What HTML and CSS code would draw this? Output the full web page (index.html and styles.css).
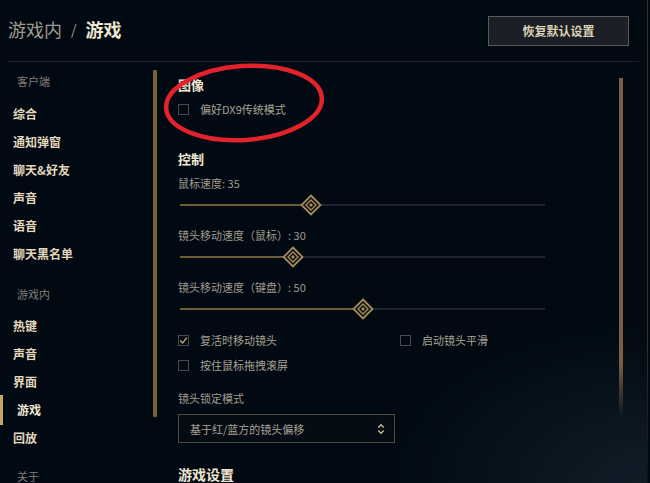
FILE: index.html
```html
<!DOCTYPE html>
<html lang="zh">
<head>
<meta charset="utf-8">
<title>游戏内 / 游戏</title>
<link rel="stylesheet" href="styles.css">
</head>
<body>
<div class="app">
  <header class="header">
    <h1 class="title"><span class="crumb">游戏内</span><span class="sep">/</span><span class="current">游戏</span></h1>
    <button class="reset-btn">恢复默认设置</button>
  </header>
  <div class="main">
    <nav class="sidebar">
      <div class="group-label">客户端</div>
      <div class="nav-item">综合</div>
      <div class="nav-item">通知弹窗</div>
      <div class="nav-item">聊天&amp;好友</div>
      <div class="nav-item">声音</div>
      <div class="nav-item">语音</div>
      <div class="nav-item">聊天黑名单</div>
      <div class="group-label group-2">游戏内</div>
      <div class="nav-item">热键</div>
      <div class="nav-item">声音</div>
      <div class="nav-item">界面</div>
      <div class="nav-item active">游戏</div>
      <div class="nav-item">回放</div>
      <div class="group-label group-3">关于</div>
    </nav>
    <div class="scroll-left"></div>
    <section class="content">
      <h2 class="section-title">图像</h2>
      <label class="check-row"><span class="box"></span><span>偏好DX9传统模式</span></label>

      <h2 class="section-title gap-lg">控制</h2>
      <div class="slider-label first">鼠标速度: 35</div>
      <div class="slider"><div class="fill" style="width:36%"></div><span class="thumb" style="left:36%"><svg width="22" height="22" viewBox="0 0 22 22"><path d="M11 1.5 L20.5 11 L11 20.5 L1.5 11 Z" fill="#0b0f14" stroke="#a88c58" stroke-width="1.8"/><path d="M11 6 L16 11 L11 16 L6 11 Z" fill="none" stroke="#a88c58" stroke-width="1.4"/><path d="M11 9 L13 11 L11 13 L9 11 Z" fill="#a88c58"/></svg></span></div>
      <div class="slider-label">镜头移动速度（鼠标）: 30</div>
      <div class="slider"><div class="fill" style="width:31%"></div><span class="thumb" style="left:31%"><svg width="22" height="22" viewBox="0 0 22 22"><path d="M11 1.5 L20.5 11 L11 20.5 L1.5 11 Z" fill="#0b0f14" stroke="#a88c58" stroke-width="1.8"/><path d="M11 6 L16 11 L11 16 L6 11 Z" fill="none" stroke="#a88c58" stroke-width="1.4"/><path d="M11 9 L13 11 L11 13 L9 11 Z" fill="#a88c58"/></svg></span></div>
      <div class="slider-label">镜头移动速度（键盘）: 50</div>
      <div class="slider"><div class="fill" style="width:50%"></div><span class="thumb" style="left:50%"><svg width="22" height="22" viewBox="0 0 22 22"><path d="M11 1.5 L20.5 11 L11 20.5 L1.5 11 Z" fill="#0b0f14" stroke="#a88c58" stroke-width="1.8"/><path d="M11 6 L16 11 L11 16 L6 11 Z" fill="none" stroke="#a88c58" stroke-width="1.4"/><path d="M11 9 L13 11 L11 13 L9 11 Z" fill="#a88c58"/></svg></span></div>

      <div class="check-grid">
        <label class="check-row"><span class="box checked"><svg width="11" height="11" viewBox="0 0 11 11"><path d="M2.2 5.6 L4.6 8 L8.8 2.6" fill="none" stroke="#c8aa6e" stroke-width="1.4"/></svg></span><span>复活时移动镜头</span></label>
        <label class="check-row"><span class="box"></span><span>启动镜头平滑</span></label>
        <label class="check-row"><span class="box"></span><span>按住鼠标拖拽滚屏</span></label>
      </div>

      <div class="field-label">镜头锁定模式</div>
      <div class="select"><span>基于红/蓝方的镜头偏移</span><svg width="8" height="12" viewBox="0 0 8 12"><path d="M1.2 4.5 L4 1.7 L6.8 4.5 M1.2 7.5 L4 10.3 L6.8 7.5" fill="none" stroke="#cdbe91" stroke-width="1.3"/></svg></div>

      <h2 class="section-title big">游戏设置</h2>

      <svg class="annotation" width="166" height="84" viewBox="0 0 166 84"><ellipse cx="82" cy="41" rx="78" ry="37" transform="rotate(-4 82 41)" fill="none" stroke="#e4222c" stroke-width="4.5"/></svg>
    </section>
    <div class="scroll-right"></div>
  </div>
</div>
</body>
</html>
```
FILE: styles.css
```css
* { box-sizing: border-box; }
html, body { margin: 0; padding: 0; }
body {
  width: 650px;
  height: 483px;
  overflow: hidden;
  background: #010a13;
  font-family: "Noto Sans CJK SC", "Noto Sans", sans-serif;
}
.app {
  width: 648px;
  height: 483px;
  background: radial-gradient(ellipse 260px 160px at 100% 100%, rgba(28, 44, 56, 0.55), rgba(1, 10, 19, 0) 100%);
  border-right: 1px solid #3a3020;
  border-image: linear-gradient(#3a3020 70%, rgba(58, 48, 32, 0.2)) 1;
}
.header {
  margin: 0 8px;
  height: 62px;
  display: flex;
  align-items: center;
  justify-content: space-between;
  border-bottom: 1px solid #1a2330;
}
.title {
  margin: -3px 0 0;
  font-size: 18px;
  line-height: 24px;
  font-weight: 400;
  color: #a09b8c;
  display: flex;
  align-items: center;
}
.sep { margin: 0 9px 0 9px; font-size: 14px; color: #a09b8c; }
.current { color: #f0e6d2; font-weight: 700; }
.reset-btn {
  margin-right: 10px;
  width: 141px;
  height: 30px;
  background: #1c2026;
  border: 1px solid #5b5a56;
  color: #ddd3b8;
  font-family: inherit;
  font-size: 12px;
  font-weight: 700;
  padding: 0;
}
.main {
  display: flex;
  height: 421px;
}
.sidebar {
  width: 153px;
  flex: none;
  padding-top: 9px;
}
.group-label {
  font-size: 11px;
  line-height: 20px;
  padding-left: 17px;
  color: #807d75;
  margin-bottom: 9px;
}
.group-2 { margin-top: 16px; margin-bottom: 8px; }
.group-3 { margin-top: 14px; }
.nav-item {
  height: 28px;
  line-height: 28px;
  padding-left: 13px;
  font-size: 12px;
  font-weight: 700;
  color: #e2d7bb;
  position: relative;
}
.nav-item.active {
  padding-left: 17px;
  color: #f0e6d2;
}
.nav-item.active::before {
  content: "";
  position: absolute;
  left: 0;
  top: -1px;
  width: 3px;
  height: 30px;
  background: #c8a45e;
}
.scroll-left {
  width: 4px;
  flex: none;
  margin-top: 8px;
  height: 347px;
  background: #7a5f38;
  border-radius: 1px;
}
.content {
  flex: 1;
  position: relative;
  padding: 14px 0 0 21px;
}
.section-title {
  margin: 0;
  font-size: 13px;
  line-height: 18px;
  font-weight: 700;
  color: #f0e6d2;
}
.section-title.gap-lg { margin-top: 32px; }
.section-title.big { margin-top: 22px; font-size: 14px; }
.check-row {
  display: flex;
  align-items: center;
  height: 18px;
  gap: 11px;
  font-size: 11px;
  color: #a8a293;
  margin-top: 6px;
}
.box {
  width: 11px;
  height: 11px;
  border: 1px solid #4a4a4c;
  display: flex;
  align-items: center;
  justify-content: center;
  flex: none;
}
.box svg { display: block; margin: -1px; }
.slider-label {
  font-size: 11px;
  line-height: 16px;
  color: #a09b8c;
  margin-top: 12px;
}
.slider-label.first { margin-top: 7px; }
.slider {
  position: relative;
  margin-top: 4px;
  margin-left: 2px;
  width: 365px;
  height: 20px;
  display: flex;
  align-items: center;
  background: linear-gradient(#1c2530, #1c2530) 0 50% / 100% 2px no-repeat;
}
.fill {
  height: 2px;
  background: #6e5b38;
}
.thumb {
  position: absolute;
  top: -1px;
  width: 22px;
  height: 22px;
  margin-left: -11px;
}
.thumb svg { display: block; }
.check-grid {
  margin-top: 12px;
  display: grid;
  grid-template-columns: 222px auto;
  row-gap: 7px;
}
.check-grid .check-row { margin-top: 0; }
.field-label {
  margin-top: 16px;
  font-size: 11px;
  line-height: 16px;
  color: #a09b8c;
}
.select {
  margin-top: 8px;
  width: 217px;
  height: 29px;
  border: 1px solid #4e4a40;
  background: #050c14;
  display: flex;
  align-items: center;
  justify-content: space-between;
  padding: 0 9px 0 11px;
  font-size: 11px;
  color: #a8a293;
}
.annotation {
  position: absolute;
  left: 5px;
  top: 0;
}
.scroll-right {
  width: 4px;
  flex: none;
  margin: 16px 24px 0 0;
  height: 340px;
  background: linear-gradient(#7a6040 0, #7a6040 84%, rgba(122, 96, 64, 0) 100%);
}
```
